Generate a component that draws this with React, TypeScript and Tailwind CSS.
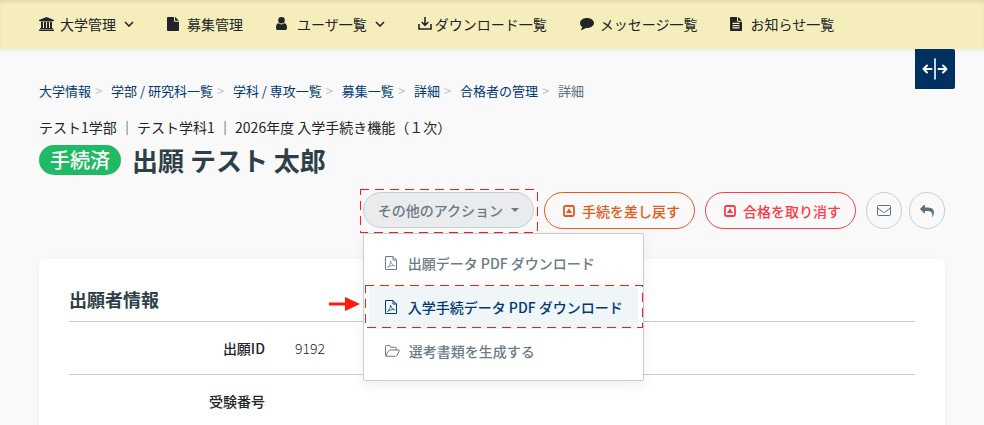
import type { ReactNode } from "react";

type IconProps = { className?: string };

/* Icons */
function BankIcon({ className }: IconProps) {
  return (
    <svg viewBox="0 0 30 28" className={className} fill="currentColor" aria-hidden="true">
      <path d="M15 0l15 6v2h-2c0 .55-.48 1-1.08 1H3.08C2.48 9 2 8.55 2 8H0V6L15 0zM4 10h4v12h2V10h4v12h2V10h4v12h2V10h4v12h.92c.6 0 1.08.45 1.08 1v1H2v-1c0-.55.48-1 1.08-1H4V10zM28.92 25c.6 0 1.08.45 1.08 1v2H0v-2c0-.55.48-1 1.08-1h27.84z" />
    </svg>
  );
}

function FileIcon({ className }: IconProps) {
  return (
    <svg viewBox="0 0 24 28" className={className} fill="currentColor" aria-hidden="true">
      <path d="M16 0h.2c.4.2.7.4 1 .7l6.1 6.1c.3.3.5.6.7.9h-8V0zM14 8c0 .8.7 1.5 1.5 1.5H24v17c0 .8-.7 1.5-1.5 1.5h-21C.7 28 0 27.3 0 26.5v-25C0 .7.7 0 1.5 0H14v8z" />
    </svg>
  );
}

function FileTextIcon({ className }: IconProps) {
  return (
    <svg viewBox="0 0 24 28" className={className} fill="currentColor" fillRule="evenodd" aria-hidden="true">
      <path d="M16 0h.2c.4.2.7.4 1 .7l6.1 6.1c.3.3.5.6.7.9h-8V0zM14 8c0 .8.7 1.5 1.5 1.5H24v17c0 .8-.7 1.5-1.5 1.5h-21C.7 28 0 27.3 0 26.5v-25C0 .7.7 0 1.5 0H14v8zM5 11.5v2.3h14v-2.3zM5 16v2.3h14V16zM5 20.5v2.3h14v-2.3z" />
    </svg>
  );
}

function UserIcon({ className }: IconProps) {
  return (
    <svg viewBox="0 0 20 24" className={className} fill="currentColor" aria-hidden="true">
      <path d="M20 19.9c0 2.5-1.6 4.1-4.1 4.1H4.1C1.6 24 0 22.4 0 19.9c0-3.9.9-8.3 5-8.3 1.3 1.2 3 1.9 5 1.9s3.7-.7 5-1.9c4.1 0 5 4.4 5 8.3z" />
      <circle cx="10" cy="6" r="6" />
    </svg>
  );
}

function DownloadIcon({ className }: IconProps) {
  return (
    <svg viewBox="0 0 14 13" className={className} fill="none" stroke="currentColor" strokeWidth="1.6" aria-hidden="true">
      <path d="M1 7v5h12V7M7 0v8M3.7 5L7 8.3 10.3 5" />
    </svg>
  );
}

function CommentIcon({ className }: IconProps) {
  return (
    <svg viewBox="0 0 28 26" className={className} fill="currentColor" aria-hidden="true">
      <path d="M28 12c0 5.5-6.3 10-14 10-.9 0-1.9-.1-2.8-.2-2.5 2.2-5.5 3.500-8.700 4-.5.1-.9-.6-.5-1.100 1.300-1.400 2.200-2.700 2.600-4.500C1.800 18.300 0 15.300 0 12 0 6.500 6.300 2 14 2s14 4.500 14 10z" />
    </svg>
  );
}

function ChevronIcon({ className }: IconProps) {
  return (
    <svg viewBox="0 0 10 6" className={className} fill="none" stroke="currentColor" strokeWidth="1.6" aria-hidden="true">
      <path d="M1 1l4 4 4-4" />
    </svg>
  );
}

function SplitIcon({ className }: IconProps) {
  return (
    <svg viewBox="0 0 26 22" className={className} fill="none" stroke="currentColor" strokeWidth="2" strokeLinejoin="round" strokeLinecap="round" aria-hidden="true">
      <path d="M13 1v20" strokeWidth="1.6" />
      <path d="M9.5 11H2M5 7.5L1.5 11 5 14.5M16.5 11H24M21 7.5l3.500 3.500-3.500 3.500" />
    </svg>
  );
}

function SquareUpIcon({ className }: IconProps) {
  return (
    <svg viewBox="0 0 12 12" className={className} aria-hidden="true">
      <rect x="1" y="1" width="10" height="10" rx="1.5" fill="none" stroke="currentColor" strokeWidth="1.8" />
      <path d="M6 3.2L9 7.9H3z" fill="currentColor" />
    </svg>
  );
}

function EnvelopeIcon({ className }: IconProps) {
  return (
    <svg viewBox="0 0 14 11" className={className} fill="none" stroke="currentColor" aria-hidden="true">
      <rect x=".5" y=".5" width="13" height="10" rx="1" />
      <path d="M.7 3L5.8 7c.8.6 1.6.6 2.4 0l5.1-4" />
    </svg>
  );
}

function ReplyIcon({ className }: IconProps) {
  return (
    <svg viewBox="0 0 28 24" className={className} fill="currentColor" aria-hidden="true">
      <path d="M28 15c0 2.9-1.2 5.9-2.4 8.3-.2.4-.4.7-.7.7s-.5-.3-.4-.7c.7-6.6-.6-11.3-11-11.3H10v4c0 .9-1.1 1.3-1.7.7l-8-8a1 1 0 010-1.4l8-8C8.9-.3 10 .1 10 1v4h3.5C20.5 5 28 6.3 28 15z" />
    </svg>
  );
}

function PdfIcon({ className }: IconProps) {
  return (
    <svg viewBox="0 0 12 14" className={className} fill="none" stroke="currentColor" aria-hidden="true">
      <path d="M.5.5H8L11.5 4v9.5H.5zM8 .5V4h3.5" />
      <path d="M2.5 11.5C4 10.5 5.7 7.5 5.5 5c1 3 2 4.500 4.200 4.600C7 9.300 4.500 10 2.500 11.500z" strokeWidth=".7" />
    </svg>
  );
}

function FolderIcon({ className }: IconProps) {
  return (
    <svg viewBox="0 0 15 12" className={className} fill="none" stroke="currentColor" strokeLinejoin="round" aria-hidden="true">
      <path d="M.5 10.5v-9q0-1 1-1h2.800q1 0 1 1v.7h5q1 0 1 1V5M.7 11L3.500 6q.5-1 1.500-1h8.800q.9 0 .5.8l-2.300 4.500q-.6 1-1.600 1H1.200q-.7 0-.7-.8" />
    </svg>
  );
}

function DashedFrame() {
  return (
    <svg className="pointer-events-none absolute inset-0 h-full w-full overflow-visible" aria-hidden="true">
      <rect width="100%" height="100%" fill="none" stroke="#ff1a12" strokeWidth="1" strokeDasharray="9 6" shapeRendering="crispEdges" />
    </svg>
  );
}

/* Navigation */
function NavItem({ icon, label, menu }: { icon: ReactNode; label: string; menu?: boolean }) {
  return (
    <a href="#" className="flex items-center">
      {icon}
      {label}
      {menu && <ChevronIcon className="ml-2 w-[10px]" />}
    </a>
  );
}

const crumbs = ["大学情報", "学部 / 研究科一覧", "学科 / 専攻一覧", "募集一覧", "詳細", "合格者の管理"];

const rows = [
  { label: "出願ID", value: "9192" },
  { label: "受験番号", value: "" },
];

export default function App() {
  return (
    <div className="min-h-screen bg-[#f9f9f9] font-['Noto_Sans_CJK_JP',sans-serif] text-sm text-[#212529]">
      <header className="relative bg-[#f5eebc] shadow-[0_1px_5px_rgba(0,0,0,0.08),inset_0_3px_4px_-2px_rgba(0,0,0,0.12)]">
        <nav className="flex h-[49px] items-center gap-[33px] px-[39px] pb-0.5 whitespace-nowrap">
          <NavItem icon={<BankIcon className="mr-[6px] w-[15px]" />} label="大学管理" menu />
          <NavItem icon={<FileIcon className="mr-2 w-3" />} label="募集管理" />
          <NavItem icon={<UserIcon className="mr-[10px] w-[11px]" />} label="ユーザ一覧" menu />
          <NavItem icon={<DownloadIcon className="mr-[3px] w-[14px]" />} label="ダウンロード一覧" />
          <NavItem icon={<CommentIcon className="mr-[6px] w-[14px]" />} label="メッセージ一覧" />
          <NavItem icon={<FileTextIcon className="mr-2 w-3" />} label="お知らせ一覧" />
        </nav>
        <button
          type="button"
          aria-label="表示幅の切り替え"
          className="absolute top-full right-[29px] flex size-10 items-center justify-center rounded-r-xs bg-[#003060] text-white"
        >
          <SplitIcon className="w-[26px]" />
        </button>
      </header>

      <main className="px-[39px] pt-8">
        {/* Breadcrumb */}
        <ol className="flex text-[13px] leading-5 text-[#003a75]">
          {crumbs.map((crumb) => (
            <li key={crumb} className="flex">
              <a href="#">{crumb}</a>
              <span className="w-5 pl-1 text-[#b8c4cc]">&gt;</span>
            </li>
          ))}
          <li className="text-[#5d6d78]">詳細</li>
        </ol>

        {/* Title */}
        <p className="mt-4 leading-5">テスト1学部 ｜ テスト学科1 ｜ 2026年度 入学手続き機能（１次）</p>
        <div className="mt-2 flex items-center gap-[11px]">
          <span className="rounded-full bg-[#20b964] px-[11px] text-xl leading-[30px] font-medium text-white">手続済</span>
          <h1 className="text-[26px] leading-[30px] font-bold text-[#2f3f48]">出願 テスト 太郎</h1>
        </div>

        {/* Actions */}
        <div className="mt-[17px] flex justify-end gap-[10px] font-medium whitespace-nowrap">
          <div className="relative">
            <button
              type="button"
              aria-expanded="true"
              className="flex h-9 items-center gap-2 rounded-full border border-[#c5ced6] bg-[#e9ebec] px-[14px] text-[#6b7a86]"
            >
              その他のアクション
              <span className="border-x-4 border-t-4 border-x-transparent border-t-current" />
            </button>
            <div className="pointer-events-none absolute -inset-[3px]">
              <DashedFrame />
            </div>

            {/* Dropdown */}
            <div className="absolute top-[41px] left-0 z-10 w-[281px] rounded-xs border border-[#c5ced6] bg-white px-[5px] py-[7px] text-[#6b7a86] shadow-[0_5px_12px_rgba(0,0,0,0.06)]">
              <a href="#" className="flex h-11 items-center gap-[11px] px-4">
                <PdfIcon className="w-3" />
                出願データ PDF ダウンロード
              </a>
              <a href="#" className="relative flex h-11 items-center gap-[11px] bg-[#f0f5f8] px-4 text-[#003a75]">
                <PdfIcon className="w-3 shrink-0" />
                入学手続データ PDF ダウンロード
                <span className="pointer-events-none absolute -inset-x-1 top-0 bottom-[2px]">
                  <DashedFrame />
                </span>
                <svg viewBox="0 0 31 14" className="absolute top-3 right-full mr-[9px] w-[31px]" fill="#ff1a12" aria-hidden="true">
                  <path d="M0 5.5h16V0l15 7-15 7V8.500H0z" />
                </svg>
              </a>
              <a href="#" className="flex h-11 items-center gap-[9px] px-4">
                <FolderIcon className="w-[15px]" />
                選考書類を生成する
              </a>
            </div>
          </div>
          <button type="button" className="flex h-[37px] items-center gap-[7px] rounded-full border border-[#e55a1b] pr-[14px] pl-[18px] text-[#e55a1b]">
            <SquareUpIcon className="w-3" />
            手続を差し戻す
          </button>
          <button type="button" className="flex h-[37px] items-center gap-[7px] rounded-full border border-[#fb3c48] pr-[14px] pl-[18px] text-[#fb3c48]">
            <SquareUpIcon className="w-3" />
            合格を取り消す
          </button>
          <div className="flex gap-[7px] text-[#5f707d]">
            <button type="button" aria-label="メール" className="flex h-[37px] w-9 items-center justify-center rounded-full border border-[#c5ced6]">
              <EnvelopeIcon className="w-[14px]" />
            </button>
            <button type="button" aria-label="戻る" className="flex h-[37px] w-9 items-center justify-center rounded-full border border-[#c5ced6]">
              <ReplyIcon className="w-[14px]" />
            </button>
          </div>
        </div>

        {/* Applicant details */}
        <section className="mt-[30px] rounded-t bg-white px-[30px] pt-6 shadow-[0_2px_8px_rgba(0,0,0,0.05)]">
          <h2 className="text-lg leading-8 font-bold text-[#2f3f48]">出願者情報</h2>
          <table className="mt-[6px] w-full border-collapse">
            <tbody>
              {rows.map((row) => (
                <tr key={row.label} className="h-[53px] border-t border-[#c5ced6]">
                  <th scope="row" className="w-[196px] text-right font-medium">
                    {row.label}
                  </th>
                  <td className="pl-[30px] font-light">{row.value}</td>
                </tr>
              ))}
            </tbody>
          </table>
        </section>
      </main>
    </div>
  );
}
